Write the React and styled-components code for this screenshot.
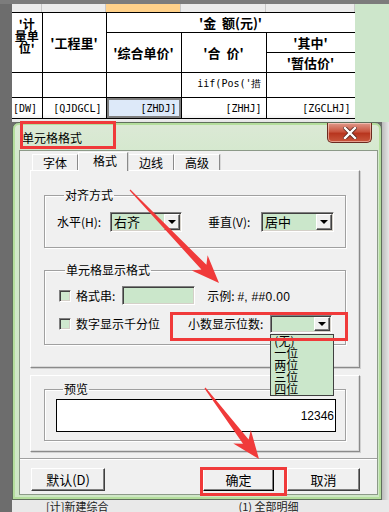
import React from "react";
import styled, { createGlobalStyle } from "styled-components";

const Global = createGlobalStyle`
  html, body { margin: 0; padding: 0; background: #6d6d6d; }
  body {
    font-family: "Noto Sans CJK SC", "Liberation Sans", sans-serif;
    font-size: 12px;
    color: #000;
  }
  * { box-sizing: border-box; }
`;

const Screen = styled.div`
  position: relative;
  width: 389px;
  height: 512px;
  overflow: hidden;
  background: #6d6d6d;
  display: flex;
  flex-direction: column;
`;

const TopStrip = styled.div`
  height: 4px;
  flex: none;
  background: #7c7c7c;
`;

const SheetRow = styled.div`
  display: flex;
  height: 118px;
  flex: none;
  padding-left: 12px;
`;

const Sheet = styled.div`
  width: 343px;
  background: linear-gradient(#fff 110px, #e4e4e4);
  display: flex;
  flex-direction: column;
  overflow: hidden;
`;

const ColBar = styled.div`
  display: grid;
  grid-template-columns: 30px 64px 75px 85px 89px;
  height: 8px;
  flex: none;
`;

const ColHead = styled.div`
  background: ${(p) => (p.$active ? "#ffd18a" : "#ececec")};
  border-right: 1px solid #c8c8c8;
`;

const SidePanel = styled.div`
  flex: 1;
  background: #cde6cb;
`;

const Table = styled.table`
  width: 343px;
  table-layout: fixed;
  border-collapse: collapse;
  font-size: 13px;
`;

const Row = styled.tr`
  height: ${(p) => p.$h}px;
`;

const Head = styled.td`
  border: 1px solid #000;
  text-align: center;
  font-weight: 700;
  padding: 0;
  line-height: 14px;
  white-space: nowrap;
  &:first-child { border-left: none; }
`;

const UnitHead = styled(Head)`
  vertical-align: top;
  padding-top: 5px;
  font-size: 12px;
  line-height: 12px;
  white-space: normal;
  overflow: hidden;
`;

const Cell = styled.td`
  border: 1px solid #000;
  padding: 0 4px 0 1px;
  font-family: "DejaVu Sans Mono", "Liberation Mono", monospace;
  font-size: 10px;
  text-align: ${(p) => p.$align || "right"};
  vertical-align: ${(p) => (p.$top ? "top" : "middle")};
  padding-top: ${(p) => (p.$top ? "4px" : "0")};
  white-space: nowrap;
  overflow: hidden;
  background: ${(p) => (p.$selected ? "#dde9f9" : "transparent")};
  box-shadow: ${(p) => (p.$selected ? "inset 0 0 0 2px #7e7e7e" : "none")};
  &:first-child { border-left: none; }
`;

const DialogRow = styled.div`
  display: flex;
  height: 378px;
  flex: none;
  padding-left: 12px;
`;

const RightStrip = styled.div`
  flex: 1;
  background: linear-gradient(90deg, #bcbcbc, #e6e6e6);
`;

const Dialog = styled.div`
  width: 370px;
  border: 1px solid #5f6f5c;
  border-radius: 7px 7px 0 0;
  background: linear-gradient(#dce9d6, #d2e8cb 40px, #cfe7c6);
  box-shadow: inset 0 0 0 2px #b4de9c;
  padding: 0 3px 4px 6px;
  display: flex;
  flex-direction: column;
`;

const TitleBar = styled.div`
  height: 27px;
  display: flex;
  justify-content: space-between;
  align-items: flex-start;
`;

const Title = styled.div`
  margin: 8px 0 0 3px;
  font-size: 12px;
  line-height: 14px;
`;

const CloseButton = styled.div`
  width: 45px;
  height: 20px;
  margin-right: 6px;
  border: 1px solid #6b2a20;
  border-top: none;
  border-radius: 0 0 5px 5px;
  background: linear-gradient(#e0998b, #c9553f 45%, #b8361f 55%, #c9573d);
  box-shadow: inset 0 0 0 1px rgba(255, 220, 210, 0.55);
  display: flex;
  align-items: center;
  justify-content: center;
`;

const Client = styled.div`
  flex: 1;
  background: #f0f0f0;
  border: 1px solid #8c9a88;
  display: flex;
  flex-direction: column;
`;

const Body = styled.div`
  padding: 1px 17px 0 10px;
  display: flex;
  flex-direction: column;
`;

const Tabs = styled.div`
  display: flex;
  align-items: flex-end;
  height: 18px;
  padding-left: 2px;
`;

const Tab = styled.div`
  width: ${(p) => p.$w}px;
  height: ${(p) => (p.$active ? 19 : 16)}px;
  margin-bottom: ${(p) => (p.$active ? -1 : 0)}px;
  background: #f0f0f0;
  border: 1px solid #a0a0a0;
  border-bottom: none;
  border-color: #fff #8a8a8a #8a8a8a #fff;
  box-shadow: 1px 0 0 #d8d8d8;
  padding: 1px 0 0 ${(p) => (p.$active ? 14 : 10)}px;
  font-size: 12px;
  line-height: 14px;
  position: relative;
  z-index: ${(p) => (p.$active ? 1 : 0)};
`;

const Panel = styled.div`
  height: ${(p) => p.$h}px;
  margin-top: ${(p) => p.$mt || 0}px;
  border: 1px solid #a0a0a0;
  border-color: #fff #8a8a8a #8a8a8a #fff;
  box-shadow: 1px 1px 0 #d0d0d0, inset -1px -1px 0 #d8d8d8;
  padding: ${(p) => p.$pt}px 13px 0 13px;
  display: flex;
  flex-direction: column;
`;

const Group = styled.fieldset`
  margin: ${(p) => p.$mt || 0}px 0 0 0;
  padding: ${(p) => p.$pad};
  border: 1px solid #a0a0a0;
  box-shadow: 1px 1px 0 #fff, inset 1px 1px 0 #fff;
  display: flex;
  flex-direction: column;
  gap: ${(p) => p.$gap || 0}px;
  min-width: 0;
`;

const Legend = styled.legend`
  padding: 0 1px;
  margin-left: 7px;
  font-size: 12px;
  line-height: 14px;
`;

const Line = styled.div`
  display: flex;
  align-items: center;
  height: ${(p) => p.$h}px;
`;

const Label = styled.span`
  font-size: 12px;
  line-height: 14px;
  white-space: nowrap;
  width: ${(p) => (p.$w ? `${p.$w}px` : "auto")};
  margin-left: ${(p) => p.$ml || 0}px;
  flex: none;
`;

const Sample = styled.span`
  font-size: 12px;
  margin-left: ${(p) => p.$ml || 0}px;
  white-space: nowrap;
  & b {
    font-weight: 400;
    font-family: "Liberation Sans", sans-serif;
    letter-spacing: 0.3px;
  }
`;

const sunken = `
  border: 1px solid;
  border-color: #808080 #fff #fff #808080;
  box-shadow: inset 1px 1px 0 #404040, inset -1px -1px 0 #d4d0c8;
`;

const Check = styled.span`
  width: 12px;
  height: 12px;
  flex: none;
  background: #cfe8cf;
  ${sunken}
  margin-left: 1px;
`;

const Combo = styled.div`
  position: relative;
  width: ${(p) => p.$w}px;
  height: ${(p) => p.$h}px;
  margin-left: ${(p) => p.$ml || 0}px;
  flex: none;
  background: #cbe7cb;
  ${sunken}
  display: flex;
  align-items: stretch;
`;

const ComboText = styled.span`
  flex: 1;
  padding: 0 0 0 3px;
  font-size: 13px;
  line-height: ${(p) => p.$lh}px;
`;

const DropButton = styled.span`
  width: 16px;
  margin: 1px 1px 1px 0;
  background: #f0f0f0;
  border: 1px solid;
  border-color: #fff #404040 #404040 #fff;
  box-shadow: inset -1px -1px 0 #808080;
  display: flex;
  align-items: center;
  justify-content: center;
  &::after {
    content: "";
    border-left: 4px solid transparent;
    border-right: 4px solid transparent;
    border-top: 4px solid #000;
  }
`;

const TextBox = styled.div`
  width: ${(p) => p.$w}px;
  height: ${(p) => p.$h}px;
  margin-left: ${(p) => p.$ml || 0}px;
  flex: none;
  background: #cbe7cb;
  ${sunken}
`;

const DropList = styled.div`
  position: absolute;
  top: calc(100% + 2px);
  left: -1px;
  width: 64px;
  height: 62px;
  background: #cbe7cb;
  border: 1px solid #404040;
  padding: 0 0 0 3px;
  z-index: 3;
  display: flex;
  flex-direction: column;
  overflow: hidden;
`;

const DropItem = styled.span`
  height: 12px;
  font-size: 12px;
  line-height: 12px;
  white-space: nowrap;
`;

const PreviewBox = styled.div`
  height: 33px;
  background: #fff;
  border: 1px solid #000;
  display: flex;
  align-items: center;
  justify-content: flex-end;
  padding-right: 1px;
  font-family: "Liberation Sans", sans-serif;
  font-size: 12px;
`;

const Separator = styled.div`
  margin-top: 6px;
  height: 2px;
  border-top: 1px solid #a0a0a0;
  border-bottom: 1px solid #fff;
`;

const ButtonRow = styled.div`
  margin-top: 8px;
  padding: 0 17px 0 11px;
  display: flex;
  justify-content: space-between;
`;

const ButtonGroup = styled.div`
  display: flex;
  gap: 13px;
`;

const Button = styled.div`
  width: ${(p) => p.$w}px;
  height: 23px;
  background: #f0f0f0;
  border: 1px solid;
  border-color: #fff ${(p) => (p.$default ? "#000" : "#404040")} ${(p) => (p.$default ? "#000" : "#404040")} #fff;
  box-shadow: inset -1px -1px 0 #808080;
  display: flex;
  align-items: center;
  justify-content: center;
  font-size: 13px;
`;

const BottomStrip = styled.div`
  flex: 1;
  margin-left: 12px;
  background: #e9e9e9;
  display: flex;
  gap: 130px;
  padding-left: 34px;
  font-size: 11px;
  line-height: 11px;
  overflow: hidden;
  color: #222;
  & span { margin-top: 1px; }
`;

const Annotations = styled.svg`
  position: absolute;
  left: 0;
  top: 0;
  pointer-events: none;
  z-index: 5;
`;

function arrow(sx, sy, tx, ty, L = 28, H = 11, w = 7) {
  const dx = tx - sx;
  const dy = ty - sy;
  const len = Math.hypot(dx, dy);
  const ux = dx / len;
  const uy = dy / len;
  const px = -uy;
  const py = ux;
  const bx = tx - ux * L;
  const by = ty - uy * L;
  const nx = tx - ux * L * 0.78;
  const ny = ty - uy * L * 0.78;
  const pts = [
    [sx + px * 0.6, sy + py * 0.6],
    [nx + px * w / 2, ny + py * w / 2],
    [bx + px * H, by + py * H],
    [tx, ty],
    [bx - px * H, by - py * H],
    [nx - px * w / 2, ny - py * w / 2],
    [sx - px * 0.6, sy - py * 0.6],
  ];
  return pts.map((p) => p.map((v) => v.toFixed(1)).join(",")).join(" ");
}

const RED = "#f03a3a";

export default function App() {
  return (
    <>
      <Global />
      <Screen>
        <TopStrip />
        <SheetRow>
          <Sheet>
            <ColBar>
              <ColHead />
              <ColHead />
              <ColHead $active />
              <ColHead />
              <ColHead />
            </ColBar>
            <Table>
              <colgroup>
                <col style={{ width: 30 }} />
                <col style={{ width: 64 }} />
                <col style={{ width: 75 }} />
                <col style={{ width: 85 }} />
                <col style={{ width: 89 }} />
              </colgroup>
              <tbody>
                <Row $h={20}>
                  <UnitHead rowSpan={3}>'计<br />量单<br />位'</UnitHead>
                  <Head rowSpan={3}>'工程里'</Head>
                  <Head colSpan={3}>'金&nbsp;&nbsp;额(元)'</Head>
                </Row>
                <Row $h={20}>
                  <Head rowSpan={2}>'综合单价'</Head>
                  <Head rowSpan={2}>'合&nbsp;&nbsp;价'</Head>
                  <Head>'其中'</Head>
                </Row>
                <Row $h={20}>
                  <Head>'暂估价'</Head>
                </Row>
                <Row $h={25}>
                  <Cell />
                  <Cell />
                  <Cell />
                  <Cell $top>iif(Pos('措</Cell>
                  <Cell />
                </Row>
                <Row $h={21}>
                  <Cell $align="left">[DW]</Cell>
                  <Cell>[QJDGCL]</Cell>
                  <Cell $selected>[ZHDJ]</Cell>
                  <Cell>[ZHHJ]</Cell>
                  <Cell>[ZGCLHJ]</Cell>
                </Row>
              </tbody>
            </Table>
          </Sheet>
          <SidePanel />
        </SheetRow>

        <DialogRow>
          <Dialog>
            <TitleBar>
              <Title>单元格格式</Title>
              <CloseButton>
                <svg width="14" height="12" viewBox="0 0 14 12">
                  <path d="M2 1 L12 11 M12 1 L2 11" stroke="#5a2a22" strokeWidth="4" strokeLinecap="square" />
                  <path d="M2 1 L12 11 M12 1 L2 11" stroke="#fff" strokeWidth="2.4" strokeLinecap="square" />
                </svg>
              </CloseButton>
            </TitleBar>
            <Client>
              <Body>
                <Tabs>
                  <Tab $w={46}>字体</Tab>
                  <Tab $w={50} $active>格式</Tab>
                  <Tab $w={46}>边线</Tab>
                  <Tab $w={46}>高级</Tab>
                </Tabs>
                <Panel $h={198} $pt={17}>
                  <Group $pad="10px 0 15px 12px">
                    <Legend>对齐方式</Legend>
                    <Line $h={20}>
                      <Label $w={53}>水平(H):</Label>
                      <Combo $w={72} $h={20}>
                        <ComboText $lh={17}>右齐</ComboText>
                        <DropButton />
                      </Combo>
                      <Label $ml={26} $w={53}>垂直(V):</Label>
                      <Combo $w={73} $h={20}>
                        <ComboText $lh={17}>居中</ComboText>
                        <DropButton />
                      </Combo>
                    </Line>
                  </Group>
                  <Group $mt={15} $pad="9px 0 11px 13px" $gap={10}>
                    <Legend>单元格显示格式</Legend>
                    <Line $h={19}>
                      <Check />
                      <Label $ml={5}>格式串:</Label>
                      <TextBox $ml={7} $w={73} $h={19} />
                      <Sample $ml={12}>
                        示例: <b>#, ##0.00</b>
                      </Sample>
                    </Line>
                    <Line $h={18}>
                      <Check />
                      <Label $ml={5}>数字显示千分位</Label>
                      <Label $ml={28}>小数显示位数:</Label>
                      <Combo $ml={7} $w={62} $h={18}>
                        <ComboText $lh={15} />
                        <DropButton />
                        <DropList>
                          <DropItem>(无)</DropItem>
                          <DropItem>一位</DropItem>
                          <DropItem>两位</DropItem>
                          <DropItem>三位</DropItem>
                          <DropItem>四位</DropItem>
                        </DropList>
                      </Combo>
                    </Line>
                  </Group>
                </Panel>
                <Panel $h={77} $mt={7} $pt={6}>
                  <Group $pad="3px 9px 8px 11px">
                    <Legend>预览</Legend>
                    <PreviewBox>12346</PreviewBox>
                  </Group>
                </Panel>
              </Body>
              <Separator />
              <ButtonRow>
                <Button $w={74}>默认(D)</Button>
                <ButtonGroup>
                  <Button $w={71} $default>确定</Button>
                  <Button $w={73}>取消</Button>
                </ButtonGroup>
              </ButtonRow>
            </Client>
          </Dialog>
          <RightStrip />
        </DialogRow>

        <BottomStrip>
          <span>[计]新建综合</span>
          <span>(1) 全部明细</span>
        </BottomStrip>

        <Annotations width="389" height="512" viewBox="0 0 389 512">
          <rect x="21.5" y="122.5" width="93" height="25" fill="none" stroke={RED} strokeWidth="3" />
          <rect x="171.5" y="313.5" width="175" height="26" fill="none" stroke={RED} strokeWidth="3" />
          <rect x="201.5" y="468.5" width="84" height="26" fill="none" stroke={RED} strokeWidth="3" />
          <polygon points={arrow(130, 190, 219, 283)} fill={RED} />
          <polygon points={arrow(205, 388, 259, 459)} fill={RED} />
        </Annotations>
      </Screen>
    </>
  );
}
